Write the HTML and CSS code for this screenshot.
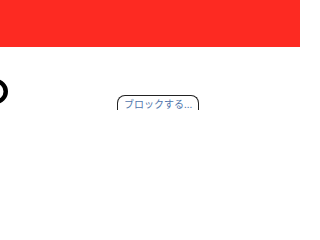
FILE: index.html
```html
<!DOCTYPE html>
<html lang="ja">
<head>
<meta charset="utf-8">
<link rel="stylesheet" href="styles.css">
</head>
<body>
<header class="bar"></header>
<main class="content">
  <svg class="ring" width="25" height="25" viewBox="0 0 25 25" aria-hidden="true">
    <circle cx="12.5" cy="12.5" r="10.25" fill="none" stroke="#000" stroke-width="4.5"/>
  </svg>
  <button class="block-btn" type="button">ブロックする...</button>
</main>
</body>
</html>
```
FILE: styles.css
```css
html, body {
  margin: 0;
  padding: 0;
  background: #fff;
}
body {
  width: 300px;
  height: 203px;
  overflow: hidden;
  font-family: "Noto Sans CJK JP", "Noto Sans", sans-serif;
}
.bar {
  height: 47px;
  background: #fd2a22;
}
.content {
  display: flex;
  align-items: flex-start;
}
.ring {
  flex: none;
  margin-left: -17px;
  margin-top: 32px;
}
.block-btn {
  flex: none;
  margin-left: 109px;
  margin-top: 48px;
  width: 82px;
  height: 15px;
  padding: 0 0 0 6px;
  box-sizing: border-box;
  border: 1px solid #222;
  border-bottom: none;
  border-radius: 8px 8px 0 0;
  background: #fff;
  color: #4f75ab;
  font-family: "Noto Sans CJK JP", sans-serif;
  font-size: 10px;
  line-height: 13px;
  text-align: left;
  white-space: nowrap;
  overflow: hidden;
}
```
